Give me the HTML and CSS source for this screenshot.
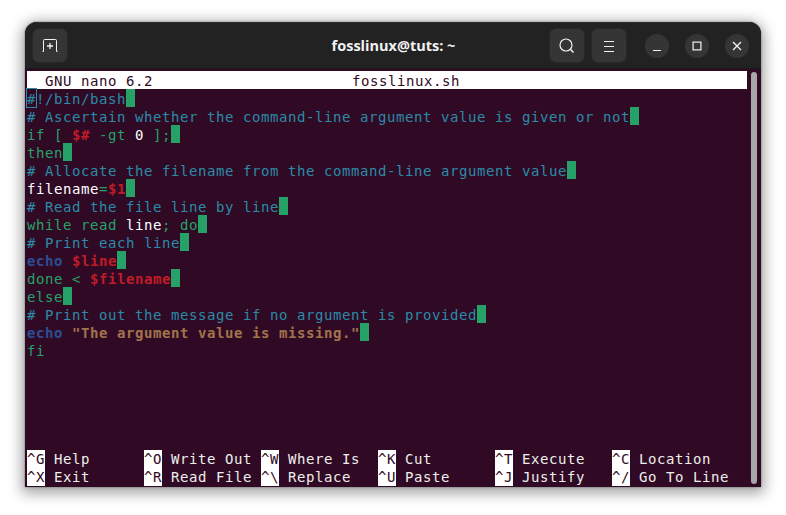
FILE: index.html
```html
<!DOCTYPE html>
<html lang="en">
<head>
<meta charset="utf-8">
<title>fosslinux@tuts: ~</title>
<link rel="stylesheet" href="styles.css">
</head>
<body>
<div class="window">
  <header class="titlebar">
    <button class="tool" aria-label="New tab">
      <svg width="16" height="16" viewBox="0 0 16 16" fill="none" stroke="#f2f2f2" stroke-width="1"><path d="M.5 13.500H1.500V2.500Q1.500 1.500 2.500 1.500H13.500Q14.500 1.500 14.500 2.500V13.500H15.500"/><path d="M8 5V11M5 8H11" stroke-width="1.300"/></svg>
    </button>
    <div class="title">fosslinux@tuts: ~</div>
    <div class="actions">
      <button class="tool" aria-label="Search">
        <svg width="16" height="16" viewBox="0 0 16 16" fill="none" stroke="#f2f2f2" stroke-width="1.200"><circle cx="7" cy="7" r="6"/><path d="M11.300 11.300L14.500 14.500" stroke-width="1.600"/></svg>
      </button>
      <button class="tool" aria-label="Menu">
        <svg width="16" height="16" viewBox="0 0 16 16" fill="none" stroke="#f2f2f2" stroke-width="1"><path d="M3 3.500H13M3 8.500H13M3 13.500H13"/></svg>
      </button>
    </div>
    <div class="controls">
      <button class="round" aria-label="Minimize">
        <svg width="12" height="12" viewBox="0 0 12 12" fill="none" stroke="#f2f2f2" stroke-width="1"><path d="M2 10.500H10"/></svg>
      </button>
      <button class="round" aria-label="Maximize">
        <svg width="12" height="12" viewBox="0 0 12 12" fill="none" stroke="#f2f2f2" stroke-width="1.200"><rect x="2.100" y="2.100" width="7.800" height="7.800"/></svg>
      </button>
      <button class="round" aria-label="Close">
        <svg width="12" height="12" viewBox="0 0 12 12" fill="none" stroke="#f2f2f2" stroke-width="1.300"><path d="M2 2L10 10M10 2L2 10"/></svg>
      </button>
    </div>
  </header>
  <main class="terminal">
    <div class="screen">
      <div class="nanobar"><span>GNU nano 6.2</span><span>fosslinux.sh</span></div>
      <div class="editor">
        <div class="ln cm"><span class="caret">#</span>!/bin/bash<i class="ws"></i></div>
        <div class="ln cm"># Ascertain whether the command-line argument value is given or not<i class="ws"></i></div>
        <div class="ln kw">if [ <b class="var">$#</b> -gt <b class="plain">0</b> ];<i class="ws"></i></div>
        <div class="ln kw">then<i class="ws"></i></div>
        <div class="ln cm"># Allocate the filename from the command-line argument value<i class="ws"></i></div>
        <div class="ln"><span class="plain">filename</span><span class="kw">=</span><b class="var">$1</b><i class="ws"></i></div>
        <div class="ln cm"># Read the file line by line<i class="ws"></i></div>
        <div class="ln kw">while read <span class="plain">line</span>; do<i class="ws"></i></div>
        <div class="ln cm"># Print each line<i class="ws"></i></div>
        <div class="ln"><b class="builtin">echo</b> <b class="var">$line</b><i class="ws"></i></div>
        <div class="ln kw">done &lt; <b class="var">$filename</b><i class="ws"></i></div>
        <div class="ln kw">else<i class="ws"></i></div>
        <div class="ln cm"># Print out the message if no argument is provided<i class="ws"></i></div>
        <div class="ln"><b class="builtin">echo</b> <b class="str">"The argument value is missing."</b><i class="ws"></i></div>
        <div class="ln kw">fi</div>
      </div>
      <div class="shortcuts">
        <div class="sc"><kbd>^G</kbd>Help</div>
        <div class="sc"><kbd>^O</kbd>Write Out</div>
        <div class="sc"><kbd>^W</kbd>Where Is</div>
        <div class="sc"><kbd>^K</kbd>Cut</div>
        <div class="sc"><kbd>^T</kbd>Execute</div>
        <div class="sc"><kbd>^C</kbd>Location</div>
        <div class="sc"><kbd>^X</kbd>Exit</div>
        <div class="sc"><kbd>^R</kbd>Read File</div>
        <div class="sc"><kbd>^\</kbd>Replace</div>
        <div class="sc"><kbd>^U</kbd>Paste</div>
        <div class="sc"><kbd>^J</kbd>Justify</div>
        <div class="sc"><kbd>^/</kbd>Go To Line</div>
      </div>
    </div>
    <div class="scrollbar"></div>
  </main>
</div>
</body>
</html>
```
FILE: styles.css
```css
* { box-sizing: border-box; }
html, body { margin: 0; height: 100%; background: #fff; overflow: hidden; }
body { padding: 22px 25px 28px; }
.window {
  height: 465px;
  display: flex;
  flex-direction: column;
  border-radius: 12px 12px 0 0;
  overflow: hidden;
  background: #300a24;
  box-shadow: 0 3px 14px 3px rgba(0, 0, 0, .38), 0 0 2px rgba(0, 0, 0, .5);
}
.titlebar {
  flex: 0 0 47px;
  display: flex;
  align-items: center;
  padding: 0 12px 0 8px;
  background: #222;
  border-top: 1px solid #2e2e2e;
  border-bottom: 1px solid #1a1a1a;
}
button { border: 0; padding: 0; display: flex; align-items: center; justify-content: center; }
.tool {
  width: 34px;
  height: 33px;
  border-radius: 6px;
  background: #353535;
  box-shadow: 0 0 0 1px #282828;
}
.title {
  flex: 1;
  text-align: center;
  color: #f2f2f2;
  font: 700 14.5px "Open Sans", "Noto Sans", sans-serif;
  padding-left: 170px;
}
.actions { display: flex; gap: 8px; margin-right: 19px; }
.controls { display: flex; gap: 16px; }
.round {
  width: 24px;
  height: 24px;
  border-radius: 50%;
  background: #353535;
}
.terminal {
  flex: 1;
  display: flex;
  padding: 2px 4px 1px 2px;
  background: #300a24;
  min-height: 0;
}
.screen {
  flex: 1;
  display: flex;
  flex-direction: column;
  font: 14px/18px "DejaVu Sans Mono", monospace;
  letter-spacing: .572px;
  color: #eeeeec;
}
.nanobar {
  height: 18px;
  flex: none;
  background: #fff;
  color: #300a24;
  display: grid;
  grid-template-columns: 307px auto;
  padding-left: 18px;
  line-height: 20px;
}
.editor { flex: 1; }
.ln { height: 18px; line-height: 20px; white-space: pre; }
.cm { color: #2a8aa8; }
.kw { color: #26a269; }
.plain { color: #fff; font-weight: 400; }
.var { color: #c01c28; }
.builtin { color: #2a4f94; }
.str { color: #a2734c; }
.ws { display: inline-block; width: 9px; height: 18px; background: #26a269; vertical-align: top; }
.caret { display: inline-block; width: 9px; height: 18px; outline: 1px solid #2a8aa8; color: #2a8aa8; }
b { font-weight: 700; }
.shortcuts { flex: none; display: grid; grid-template-columns: repeat(6, 117px); }
.sc { height: 18px; color: #eeeeec; white-space: pre; }
kbd {
  display: inline-block;
  width: 18px;
  margin-right: 9px;
  background: #fff;
  color: #300a24;
  font: inherit;
}
.scrollbar {
  flex: none;
  width: 6px;
  margin: 1px 0 2px 4px;
  border-radius: 3px;
  background: #a9a5a8;
}
```
